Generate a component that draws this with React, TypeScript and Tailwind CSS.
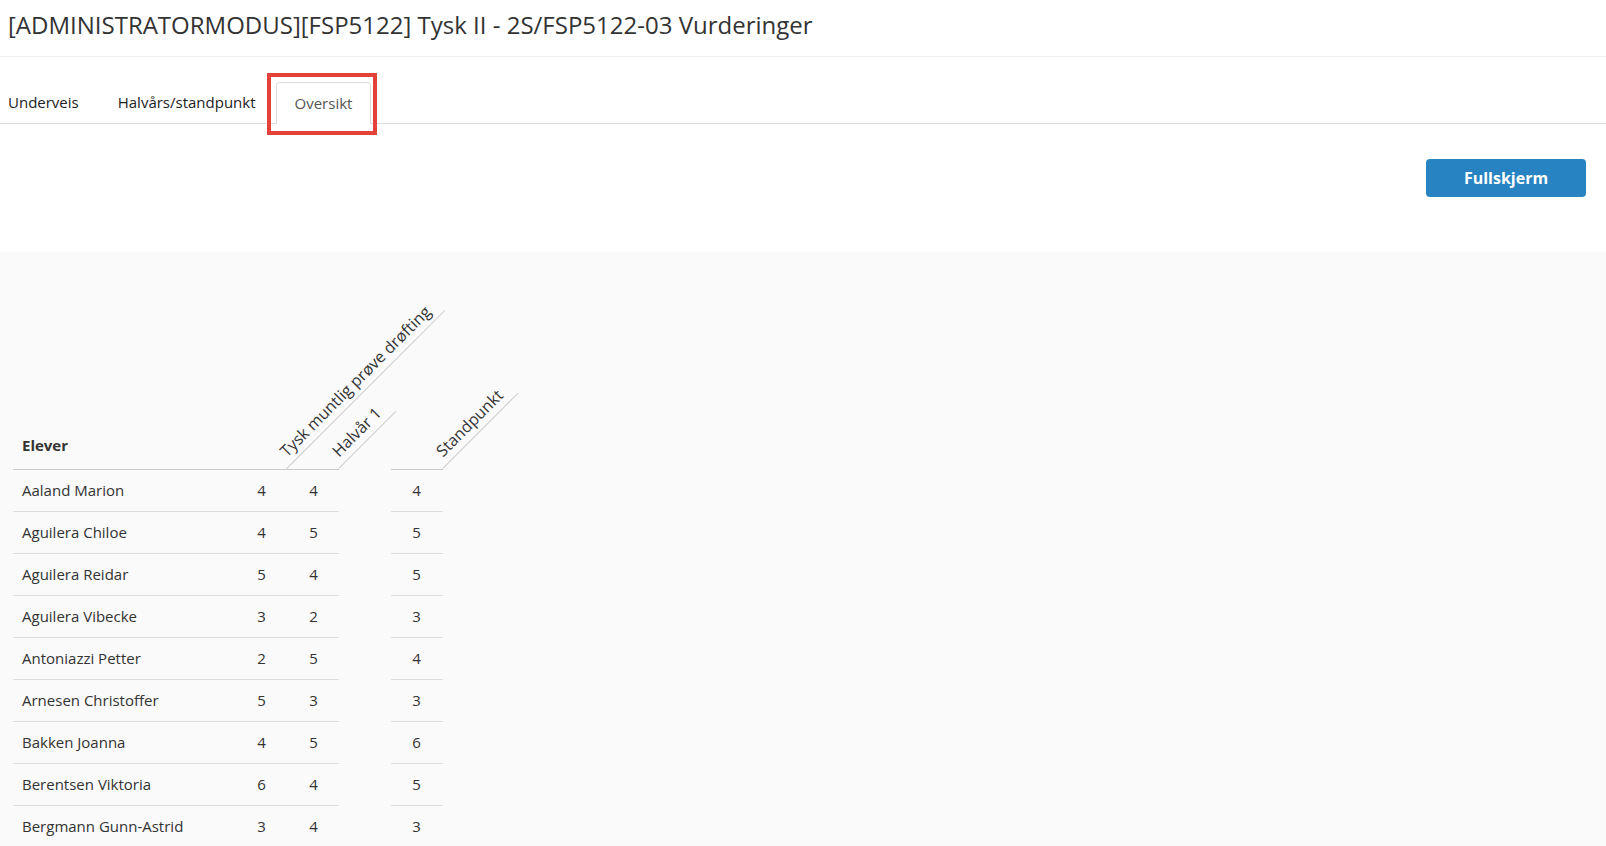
const rows = [
  { name: "Aaland Marion", a: 4, b: 4, s: 4 },
  { name: "Aguilera Chiloe", a: 4, b: 5, s: 5 },
  { name: "Aguilera Reidar", a: 5, b: 4, s: 5 },
  { name: "Aguilera Vibecke", a: 3, b: 2, s: 3 },
  { name: "Antoniazzi Petter", a: 2, b: 5, s: 4 },
  { name: "Arnesen Christoffer", a: 5, b: 3, s: 3 },
  { name: "Bakken Joanna", a: 4, b: 5, s: 6 },
  { name: "Berentsen Viktoria", a: 6, b: 4, s: 5 },
  { name: "Bergmann Gunn-Astrid", a: 3, b: 4, s: 3 },
];

function RotatedHeader({ label, wide }: { label: string; wide?: boolean }) {
  return (
    <th className="relative h-[150px] w-[52px] border-b border-[#ccc] p-0 align-bottom">
      <div
        className={`absolute bottom-0 left-full origin-bottom-left -rotate-45 whitespace-nowrap border-b border-[#ccc] pb-[2px] pl-[8px] text-left text-[16px] font-normal leading-[22px] text-[#333] ${
          wide ? "pr-[11px]" : "pr-[12px]"
        }`}
      >
        {label}
      </div>
    </th>
  );
}

export default function App() {
  return (
    <div className="flex min-h-[846px] flex-col bg-white font-['Open_Sans',sans-serif] text-[#333]">
      {/* title */}
      <div className="flex h-[57px] items-center border-b border-[#eee] pb-[6px] pl-[8px]">
        <h1 className="text-[24px] font-normal leading-[32px] text-[#333]">
          [ADMINISTRATORMODUS][FSP5122] Tysk II - 2S/FSP5122-03 Vurderinger
        </h1>
      </div>

      {/* tabs */}
      <div className="mt-[25px] flex h-[42px] items-end border-b border-[#ddd] text-[15px]">
        <div className="flex h-[41px] items-center pl-[8px] pr-[19px] text-[#222]">Underveis</div>
        <div className="flex h-[41px] items-center px-[20px] text-[#222]">Halvårs/standpunkt</div>
        <div className="relative -mb-px flex h-[42px] items-center rounded-t-[4px] border border-b-0 border-[#ddd] bg-white px-[18px] text-[#555]">
          Oversikt
          <span className="pointer-events-none absolute -bottom-[11px] -left-[10px] -right-[7px] -top-[10px] border-4 border-[#e5413b]" />
        </div>
      </div>

      {/* toolbar */}
      <div className="flex justify-end pr-[20px] pt-[35px] pb-[55px]">
        <button className="h-[38px] w-[160px] rounded-[4px] bg-[#2783c1] text-[16px] font-bold text-white">
          Fullskjerm
        </button>
      </div>

      {/* overview */}
      <div className="flex-1 bg-[#fafafa] pl-[13px] pt-[67px]">
        <table className="border-collapse text-[15px]">
          <thead>
            <tr>
              <th className="h-[150px] w-[222px] border-b border-[#ccc] pb-[13px] pl-[9px] text-left align-bottom font-bold leading-[21px]">
                Elever
              </th>
              <RotatedHeader label="Tysk muntlig prøve drøfting" wide />
              <RotatedHeader label="Halvår 1" />
              <th className="w-[52px] p-0" />
              <RotatedHeader label="Standpunkt" />
            </tr>
          </thead>
          <tbody>
            {rows.map((r) => (
              <tr key={r.name} className="h-[42px]">
                <td className="border-b border-[#ddd] pl-[9px] text-left">{r.name}</td>
                <td className="border-b border-[#ddd] pl-px text-center">{r.a}</td>
                <td className="border-b border-[#ddd] pl-px text-center">{r.b}</td>
                <td />
                <td className="border-b border-[#ddd] pr-px text-center">{r.s}</td>
              </tr>
            ))}
          </tbody>
        </table>
      </div>
    </div>
  );
}
